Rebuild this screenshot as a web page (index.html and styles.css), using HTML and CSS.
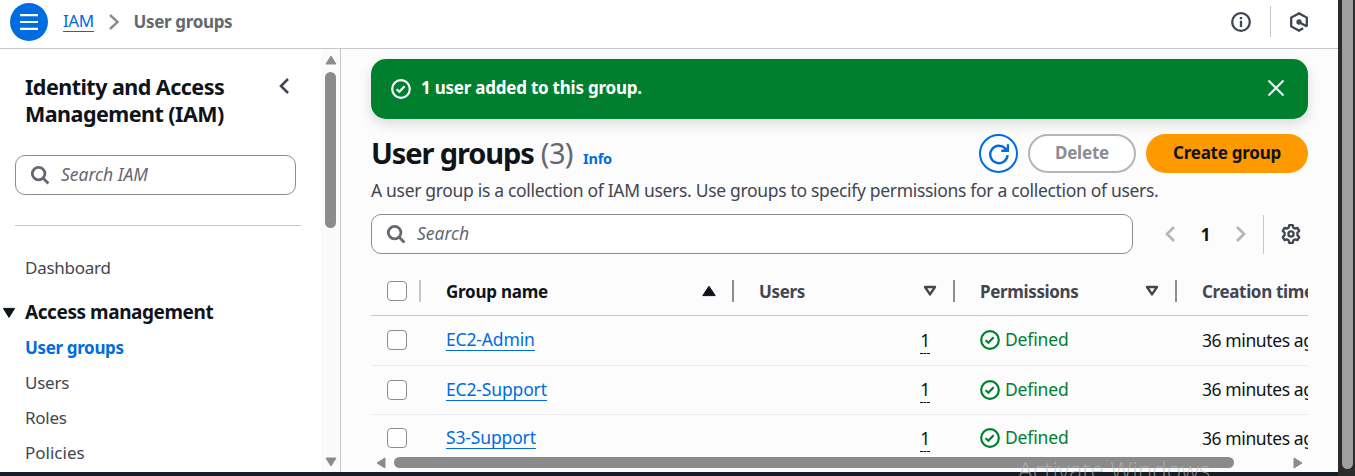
FILE: index.html
```html
<!DOCTYPE html>
<html lang="en">
<head>
<meta charset="utf-8">
<title>User groups | IAM</title>
<link rel="stylesheet" href="styles.css">
</head>
<body>
<svg class="defs" width="0" height="0">
  <symbol id="check" viewBox="0 0 20 20"><circle cx="10" cy="10" r="8.8"/><path d="M5.6 10.2l2.8 2.6 5.2-5.6"/></symbol>
  <symbol id="search" viewBox="0 0 20 20"><circle cx="8.6" cy="8.6" r="6.3"/><path d="M13 13l5.4 5.4"/></symbol>
  <symbol id="sort" viewBox="0 0 14 12"><path d="M2 2h10L7 9.4z"/></symbol>
</svg>
<div class="window">
  <div class="app">
    <header class="topbar">
      <button class="menu"><svg width="18" height="16" viewBox="0 0 18 16"><path d="M0 1.2h18M0 8h18M0 14.8h18"/></svg></button>
      <a class="crumb-link">IAM</a>
      <svg class="crumb-sep" width="12" height="18" viewBox="0 0 12 18"><path d="M2 2l7.6 7L2 16"/></svg>
      <span class="crumb">User groups</span>
      <div class="tools">
        <svg class="ico" width="20" height="20" viewBox="0 0 20 20"><circle cx="10" cy="10" r="8.8"/><path d="M10 8.8V15M10 5v2.2"/></svg>
        <span class="vline"></span>
        <svg class="ico" width="20" height="20" viewBox="0 0 20 20"><path d="M17.8 14.6V5.6L10 1.4 2.2 5.6v8.8l7.8 4.2 4.2-2.3M10 10l7.8 4.6"/><circle cx="10" cy="10" r="1.5"/></svg>
      </div>
    </header>
    <div class="body">
      <aside class="side">
        <div class="side-main">
          <div class="side-head">
            <h2>Identity and Access<br>Management (IAM)</h2>
            <svg width="12" height="18" viewBox="0 0 12 18"><path d="M10 2L3 9l7 7"/></svg>
          </div>
          <div class="input side-input"><svg><use href="#search"/></svg><span>Search IAM</span></div>
          <hr>
          <nav>
            <a class="nav-item dash">Dashboard</a>
            <div class="section"><svg width="14" height="12" viewBox="0 0 14 12"><path d="M1.4 1.4h11.2L7 10.4z"/></svg><span>Access management</span></div>
            <a class="nav-item active">User groups</a>
            <a class="nav-item">Users</a>
            <a class="nav-item">Roles</a>
            <a class="nav-item policies">Policies</a>
          </nav>
        </div>
        <div class="vscroll">
          <svg width="12" height="10" viewBox="0 0 12 10"><path d="M6 1L11 9H1z"/></svg>
          <span class="vthumb"></span>
          <svg class="down" width="12" height="10" viewBox="0 0 12 10"><path d="M1 1h10L6 9z"/></svg>
        </div>
      </aside>
      <main>
        <div class="flash">
          <svg class="status"><use href="#check"/></svg>
          <span>1 user added to this group.</span>
          <svg class="close" width="18" height="18" viewBox="0 0 18 18"><path d="M1.5 1.5l15 15M16.5 1.5l-15 15"/></svg>
        </div>
        <div class="heading">
          <h1>User groups</h1><span class="count">(3)</span><a class="info">Info</a>
          <div class="actions">
            <button class="refresh"><svg width="22" height="22" viewBox="0 0 22 22"><path d="M19.6 12.2A8.7 8.7 0 1 1 17.2 5.4l2 2M19.9 1.2v6.6h-6.6"/></svg></button>
            <button class="delete">Delete</button>
            <button class="create">Create group</button>
          </div>
        </div>
        <p class="desc">A user group is a collection of IAM users. Use groups to specify permissions for a collection of users.</p>
        <div class="filter">
          <div class="input"><svg><use href="#search"/></svg><span>Search</span></div>
          <div class="pager">
            <svg width="12" height="18" viewBox="0 0 12 18"><path d="M10 2L3 9l7 7"/></svg>
            <b>1</b>
            <svg width="12" height="18" viewBox="0 0 12 18"><path d="M2 2l7 7-7 7"/></svg>
          </div>
          <span class="vline tall"></span>
          <svg class="ico gear" width="20" height="20" viewBox="0 0 20 20"><path d="M8.2 1.2h3.6l.6 2.5 1.6.9 2.4-.8 1.8 3.1-1.8 1.8v2.6l1.8 1.8-1.8 3.1-2.4-.8-1.6.9-.6 2.5H8.2l-.6-2.5-1.6-.9-2.4.8-1.8-3.1 1.8-1.8V8.7L1.8 6.9l1.8-3.1 2.4.8 1.6-.9z"/><circle cx="10" cy="10" r="2.6"/></svg>
        </div>
        <div class="table">
          <div class="row head">
            <div class="cell pick"><i class="box"></i></div>
            <div class="cell sorted"><span>Group name</span><svg class="asc"><path d="M7 1.2L13.2 10.6H.8z"/></svg></div>
            <div class="cell"><span>Users</span><svg><use href="#sort"/></svg></div>
            <div class="cell"><span>Permissions</span><svg><use href="#sort"/></svg></div>
            <div class="cell last"><span>Creation time</span></div>
          </div>
          <div class="row">
            <div class="cell pick"><i class="box"></i></div>
            <div class="cell"><a>EC2-Admin</a></div>
            <div class="cell num"><span>1</span></div>
            <div class="cell ok"><svg><use href="#check"/></svg><span>Defined</span></div>
            <div class="cell ago"><span>36 minutes ago</span></div>
          </div>
          <div class="row">
            <div class="cell pick"><i class="box"></i></div>
            <div class="cell"><a>EC2-Support</a></div>
            <div class="cell num"><span>1</span></div>
            <div class="cell ok"><svg><use href="#check"/></svg><span>Defined</span></div>
            <div class="cell ago"><span>36 minutes ago</span></div>
          </div>
          <div class="row end">
            <div class="cell pick"><i class="box"></i></div>
            <div class="cell"><a>S3-Support</a></div>
            <div class="cell num"><span>1</span></div>
            <div class="cell ok"><svg><use href="#check"/></svg><span>Defined</span></div>
            <div class="cell ago"><span>36 minutes ago</span></div>
          </div>
        </div>
        <div class="hscroll">
          <svg width="10" height="12" viewBox="0 0 10 12"><path d="M1 6L9 1v10z"/></svg>
          <span class="hthumb"></span>
          <svg width="10" height="12" viewBox="0 0 10 12"><path d="M9 6L1 1v10z"/></svg>
        </div>
      </main>
    </div>
    <footer></footer>
  </div>
  <div class="pagescroll"><span></span></div>
  <div class="watermark">Activate Windows</div>
</div>
</body>
</html>
```

FILE: styles.css
```css
* { box-sizing: border-box; }
body { margin: 0; font-family: "Noto Sans", "Open Sans", sans-serif; font-size: 17px; line-height: 25px; color: #0f141a; }
h1, h2, p { margin: 0; }
button { font: inherit; padding: 0; border: 0; display: flex; align-items: center; justify-content: center; }
svg { display: block; flex: none; fill: none; }
.defs { position: absolute; }
.window { position: relative; display: flex; width: 1355px; height: 476px; overflow: hidden; background: #2b2b2b; }
.app { width: 1338px; display: flex; flex-direction: column; background: #fcfcfd; }

.topbar { height: 49px; flex: none; display: flex; align-items: center; padding: 0 29px 5px 10px; background: #fff; border-bottom: 1px solid #c6c6cd; }
.menu { width: 38px; height: 38px; border-radius: 50%; background: #006ce0; }
.menu svg { stroke: #fff; stroke-width: 2.2; }
.crumb-link { margin-left: 15px; line-height: 20px; color: #006ce0; border-bottom: 1px solid #006ce0; letter-spacing: -.5px; }
.crumb-sep { margin: 0 14px 0 14px; stroke: #8c8c94; stroke-width: 2.4; }
.crumb { padding-bottom: 1px; color: #656871; font-weight: 700; letter-spacing: -.35px; }
.tools { margin-left: auto; display: flex; align-items: center; gap: 19px; }
.vline { width: 1px; height: 31px; background: #c6c6cd; }
.tools .ico:last-child { margin-left: -1px; }
.ico { stroke: #424650; stroke-width: 2.3; }

.body { flex: 1; min-height: 0; display: flex; }
.side { width: 341px; display: flex; background: #fff; border-right: 1px solid #c6c6cd; overflow: hidden; }
.side-main { width: 321px; }
.side-head { display: flex; justify-content: space-between; padding: 24px 31px 0 25px; }
.side-head h2 { font-size: 21.5px; line-height: 27px; letter-spacing: -.53px; }
.side-head svg { margin-top: 4px; stroke: #424650; stroke-width: 2.6; }
.input { display: flex; align-items: center; height: 40px; padding-left: 14px; background: #fff; border: 1px solid #8c8c94; border-radius: 10px; color: #656871; font-size: 17.5px; font-style: italic; letter-spacing: 0; }
.input span { padding-bottom: 2px; }
.input svg { width: 20px; height: 20px; margin-right: 11px; stroke: #656871; stroke-width: 2.8; }
.side-input { margin: 28px 25px 0 15px; }
.side hr { margin: 30px 20px 0 15px; border: 0; border-top: 1px solid #c6c6cd; }
.nav-item { display: block; height: 35px; padding-left: 25px; color: #424650; letter-spacing: -.25px; }
.dash { margin-top: 29px; }
.section { display: flex; align-items: center; height: 27px; margin: 9px 0; padding-left: 2px; font-size: 19px; font-weight: 700; letter-spacing: -.43px; }
.section svg { margin-right: 9px; fill: #0f141a; stroke: #0f141a; stroke-linejoin: round; }
.active { color: #006ce0; font-weight: 700; letter-spacing: -.35px; }
.policies { letter-spacing: 0; }
.vscroll { width: 19px; background: #fafafa; display: flex; flex-direction: column; align-items: center; padding: 6px 0 5px; }
.vscroll svg, .hscroll svg { fill: #8b8b8b; stroke: #8b8b8b; stroke-linejoin: round; }
.vthumb { width: 11px; height: 156px; margin-top: 7px; border-radius: 6px; background: #8b8b8b; }
.down { margin-top: auto; }

main { flex: 1; min-width: 0; padding: 10px 30px 0; display: flex; flex-direction: column; overflow: hidden; }
.flash { height: 60px; flex: none; display: flex; align-items: center; padding: 0 23px 2px 20px; border-radius: 15px; background: #00802f; color: #fff; font-weight: 700; letter-spacing: -.23px; box-shadow: 0 5px 12px 1px rgba(15,20,26,.12); }
.flash span { padding-bottom: 2px; }
.status { width: 20px; height: 20px; margin: 2px 10px 0 0; stroke: #fff; stroke-width: 2.2; }
.close { margin-left: auto; stroke: #ebebf0; stroke-width: 2.2; }
.heading { height: 39px; flex: none; margin-top: 15px; display: flex; align-items: center; }
h1 { padding-bottom: 2px; font-size: 29px; line-height: 38px; letter-spacing: -1.1px; }
.count { margin-left: 7px; padding-bottom: 2px; font-size: 29px; color: #656871; letter-spacing: -.6px; }
.info { margin: 9px 0 0 10px; font-size: 14.5px; font-weight: 700; color: #006ce0; letter-spacing: -.2px; }
.actions { margin-left: auto; display: flex; gap: 10px; font-weight: 700; }
.refresh { width: 39px; height: 39px; border: 2px solid #006ce0; border-radius: 50%; background: #fff; }
.refresh svg { stroke: #006ce0; stroke-width: 2.4; }
.delete { width: 108px; padding-bottom: 2px; border: 2px solid #b4b4bb; border-radius: 20px; background: #fff; color: #8c8c94; letter-spacing: -.2px; }
.create { width: 162px; padding-bottom: 2px; border-radius: 20px; background: #f90; color: #0f141a; letter-spacing: -.25px; }
.desc { margin-top: 5px; font-size: 17.5px; color: #424650; letter-spacing: -.32px; white-space: nowrap; }
.filter { display: flex; align-items: center; margin-top: 11px; height: 40px; flex: none; }
.filter .input { width: 762px; }
.pager { display: flex; align-items: center; justify-content: space-between; margin: 0 16px 0 31px; width: 83px; }
.pager svg { stroke: #b4b4bb; stroke-width: 2.6; }
.tall { height: 39px; }
.gear { margin-left: 17px; stroke-linejoin: round; }

.table { margin-top: 13px; overflow: hidden; }
.row { display: grid; grid-template-columns: 50px 313px 221px 222px 131px; height: 49px; border-bottom: 1px solid #ebebf0; }
.head { border-color: #c6c6cd; font-weight: 700; color: #424650; }
.head + .row { height: 50px; }
.end { border: 0; }
.cell { display: flex; align-items: center; padding: 0 0 1px 25px; overflow: hidden; white-space: nowrap; font-size: 17.5px; letter-spacing: -.15px; }
.cell.pick { padding-left: 16px; }
.cell.ago { letter-spacing: -.4px; }
.head .cell { padding-bottom: 0; font-size: 17px; letter-spacing: -.35px; }
.box { width: 20px; height: 20px; border: 1.5px solid #8c8c94; border-radius: 4px; background: #fff; }
.head .cell::after { content: ""; width: 2px; height: 22px; margin-left: 16px; background: #8c8c94; }
.head .pick::after { margin-left: 12px; background: #c6c6cd; }
.head .last::after { display: none; }
.head .cell svg { width: 14px; height: 12px; margin-left: auto; stroke: #424650; stroke-width: 2.4; stroke-linejoin: round; }
.head .sorted { color: #0f141a; letter-spacing: -.25px; }
.head .cell .asc { fill: #0f141a; stroke: #0f141a; stroke-width: 1; }
.cell a { line-height: 21px; color: #006ce0; border-bottom: 1px solid #006ce0; }
.num { justify-content: flex-end; padding-right: 25px; }
.num span { border-bottom: 1px dashed #0f141a; line-height: 26px; }
.ok { color: #00802f; }
.ok span { padding-bottom: 1px; }
.ok svg { width: 20px; height: 20px; margin-right: 5px; stroke: #00802f; stroke-width: 2.2; }
.end .cell { padding-bottom: 3px; }
.hscroll { display: flex; align-items: center; margin-top: -7px; padding: 0 5px; height: 11px; flex: none; position: relative; background: #fcfcfd; }
.hthumb { width: 840px; height: 11px; margin: 0 auto 0 8px; border-radius: 6px; background: #8b8b8b; }
footer { height: 4px; background: #161d26; }
.pagescroll { width: 17px; padding-left: 4px; }
.pagescroll span { display: block; width: 11px; height: 469px; border-radius: 0 0 6px 6px; background: #9f9f9f; }
.watermark { position: absolute; left: 1018px; top: 457px; font: 300 24.5px/26px "Open Sans", sans-serif; color: rgba(190,190,190,.65); white-space: nowrap; }
```
